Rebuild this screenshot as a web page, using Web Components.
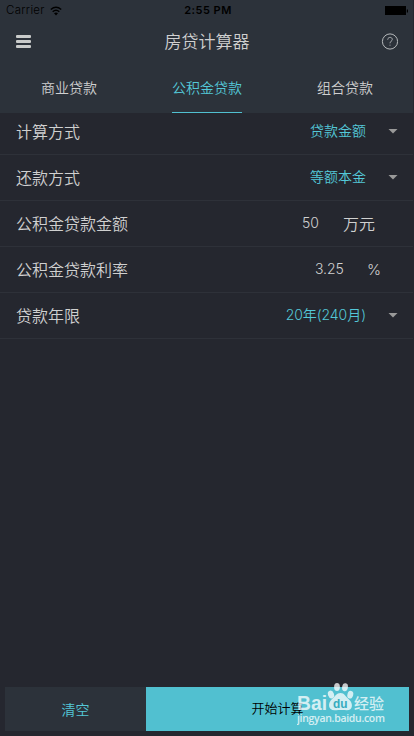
<!DOCTYPE html>
<html lang="zh-CN">
<head>
<meta charset="utf-8">
<meta name="viewport" content="width=device-width, initial-scale=1">
<title>房贷计算器</title>
<style>
html, body {
  height: 100%;
  margin: 0;
}
body {
  --panel: #2c323a;
  --page: #25272f;
  --line: #2e3139;
  --accent: #51c0d0;
  --accent-text: #54c8d8;
  --text: #d0d0d0;
  background: var(--page);
  color: var(--text);
  font-family: Inter, "Noto Sans CJK SC", sans-serif;
  font-weight: 350;
  overflow: hidden;
}
</style>
</head>
<body>
<loan-app>
  <status-bar slot="header">2:55 PM</status-bar>
  <title-bar slot="header">房贷计算器</title-bar>
  <tab-strip slot="header">
    <tab-item>商业贷款</tab-item>
    <tab-item active>公积金贷款</tab-item>
    <tab-item>组合贷款</tab-item>
  </tab-strip>

  <form-row label="计算方式" select>贷款金额</form-row>
  <form-row label="还款方式" select>等额本金</form-row>
  <form-row label="公积金贷款金额" unit="万元" style="--unit-gap: 24px; --end: 38px">50</form-row>
  <form-row label="公积金贷款利率" unit="%" style="--unit-gap: 23px; --unit-size: 15px; --end: 32px">3.25</form-row>
  <form-row label="贷款年限" select style="--spacing: -.05px">20年(240月)</form-row>

  <action-button slot="footer">清空</action-button>
  <action-button slot="footer" primary>开始计算</action-button>
  <water-mark slot="mark"></water-mark>
</loan-app>

<script>
"use strict";

/**
 * Base class: clones the markup of the subclass into an open shadow root.
 */
class BaseElement extends HTMLElement {
  constructor() {
    super();
    this.attachShadow({ mode: 'open' });

    const template = document.createElement("template");
    template.innerHTML = this.constructor.markup;
    this.shadowRoot.appendChild(template.content.cloneNode(true));
  }
}

class LoanApp extends BaseElement {
  static markup = `
<style>
:host {
  display: flex;
  flex-direction: column;
  box-sizing: border-box;
  position: relative;
  height: 736px;
  padding-right: 1px;
}
header {
  position: relative;
  z-index: 1;
  height: 113px;
  background: var(--panel);
}
/* the list is scrolled a little under the header */
main {
  flex: 1;
  margin-top: -4px;
}
footer {
  display: grid;
  grid-template-columns: 141px 1fr;
  height: 44px;
  padding: 0 4px 5px 5px;
}
</style>
<header><slot name="header"></slot></header>
<main><slot></slot></main>
<footer><slot name="footer"></slot></footer>
<slot name="mark"></slot>
`;
}
customElements.define('loan-app', LoanApp);

class StatusBar extends BaseElement {
  static markup = `
<style>
:host {
  display: grid;
  grid-template-columns: 1fr auto 1fr;
  align-items: center;
  height: 20px;
  padding: 0 5px 0 6px;
  color: #000;
  font-size: 11.5px;
  line-height: 21px;
}
.carrier {
  display: flex;
  align-items: center;
  gap: 5px;
  letter-spacing: .3px;
}
.time {
  padding-left: 2px;
  font-size: 11px;
  font-weight: 600;
  letter-spacing: .5px;
}
.battery {
  justify-self: end;
}
svg {
  display: block;
}
</style>
<div class="carrier">
  <span>Carrier</span>
  <svg width="12" height="10" viewBox="0 0 12 10">
    <path d="M.8 3.5Q6-1 11.2 3.5M2.7 5.7Q6 2.9 9.3 5.7" fill="none" stroke="#000" stroke-width="1.5"/>
    <path d="M4 7.3Q6 5.8 8 7.3L6 9.5z"/>
  </svg>
</div>
<span class="time"><slot></slot></span>
<svg class="battery" width="24" height="10" viewBox="0 0 24 10">
  <rect x="1" y="0" width="21" height="9" />
  <rect x="22.8" y="3.5" width="1.2" height="3"/>
</svg>
`;
}
customElements.define('status-bar', StatusBar);

class TitleBar extends BaseElement {
  static markup = `
<style>
:host {
  display: grid;
  grid-template-columns: 1fr auto 1fr;
  align-items: center;
  height: 44px;
  padding: 0 15px 0 16px;
  font-size: 17px;
  line-height: 44px;
}
svg {
  display: block;
}
.help {
  justify-self: end;
  margin-bottom: 1px;
}
</style>
<svg width="15" height="14" viewBox="0 0 15 14" fill="#c9cbca">
  <rect width="15" height="3" rx="1"/>
  <rect y="5" width="15" height="3" rx="1"/>
  <rect y="10" width="15" height="3" rx="1"/>
</svg>
<span><slot></slot></span>
<svg class="help" width="17" height="17" viewBox="0 0 17 17" fill="none" stroke="#c5c8ca">
  <circle cx="9" cy="8.5" r="7.6" stroke-width=".9"/>
  <path d="M6.7 6.7C6.7 3.6 11.3 3.7 11.3 6.4C11.3 8.2 9 8.2 9 10.3M9 11.7V12.7" stroke-width=".8"/>
</svg>
`;
}
customElements.define('title-bar', TitleBar);

class TabStrip extends BaseElement {
  static markup = `
<style>
:host {
  display: grid;
  grid-template-columns: repeat(3, 1fr);
  justify-items: center;
  height: 49px;
  margin-right: -1px;
}
</style>
<slot></slot>
`;
}
customElements.define('tab-strip', TabStrip);

class TabItem extends BaseElement {
  static markup = `
<style>
:host {
  display: block;
  box-sizing: border-box;
  height: 49px;
  font-size: 14px;
  line-height: 48px;
}
:host([active]) {
  color: var(--accent-text);
  border-bottom: 1px solid var(--accent);
}
</style>
<slot></slot>
`;
}
customElements.define('tab-item', TabItem);

/**
 * One line of the form. `select` gives a dropdown value, `unit` a typed one.
 */
class FormRow extends BaseElement {
  static markup = `
<style>
:host {
  display: flex;
  align-items: center;
  box-sizing: border-box;
  height: 46px;
  padding: 1px var(--end, 15px) 0 16px;
  border-bottom: 1px solid var(--line);
  font-size: 16px;
  line-height: 24px;
}
.label {
  flex: 1;
}
.value {
  padding-bottom: 2px;
  font-size: 14px;
  letter-spacing: var(--spacing, 0);
}
:host([select]) .value {
  color: var(--accent-text);
}
.unit {
  margin-left: var(--unit-gap);
  font-size: var(--unit-size, 16px);
}
.arrow {
  width: 10px;
  height: 5px;
  margin: 0 0 2px 22px;
  background: #999;
  clip-path: polygon(0 0, 100% 0, 50% 100%);
}
:host([select]) .unit,
:host(:not([select])) .arrow {
  display: none;
}
</style>
<span class="label"></span>
<span class="value"><slot></slot></span>
<span class="unit"></span>
<span class="arrow"></span>
`;

  connectedCallback() {
    this.shadowRoot.querySelector(".label").textContent = this.getAttribute("label");
    this.shadowRoot.querySelector(".unit").textContent = this.getAttribute("unit") || "";
  }
}
customElements.define('form-row', FormRow);

class ActionButton extends BaseElement {
  static markup = `
<style>
:host {
  display: block;
  height: 44px;
  background: var(--panel);
  color: var(--accent-text);
  font-size: 14px;
  line-height: 46px;
  text-align: center;
}
:host([primary]) {
  background: var(--accent);
  color: #000;
  font-size: 13px;
  line-height: 42px;
}
</style>
<slot></slot>
`;
}
customElements.define('action-button', ActionButton);

class WaterMark extends BaseElement {
  static markup = `
<style>
:host {
  position: absolute;
  left: 297px;
  top: 682px;
  z-index: 2;
  color: #fff;
  opacity: .75;
}
svg {
  display: block;
}
text {
  fill: currentColor;
}
</style>
<svg width="92" height="44" viewBox="0 0 92 44" fill="#fff">
  <text x="0" y="27.5" font-family="Liberation Sans" font-size="20" font-weight="700" textLength="30" lengthAdjust="spacingAndGlyphs">Bai</text>
  <ellipse cx="34" cy="12.5" rx="3" ry="4" transform="rotate(-20 34 12.5)"/>
  <ellipse cx="40" cy="5" rx="2.9" ry="4"/>
  <ellipse cx="48" cy="5.2" rx="2.9" ry="4" transform="rotate(10 48 5.2)"/>
  <ellipse cx="53.3" cy="12.7" rx="2.9" ry="3.9" transform="rotate(15 53.3 12.7)"/>
  <path d="M43.5 11C39.5 11 38 14.5 35 17C30.5 21 31 28.3 37.5 28.3C41 28.3 46 27.8 49.5 28.3C56 28.6 56.5 21.5 52 17.5C48.5 14.5 47.5 11 43.5 11z"/>
  <text x="36" y="26.3" font-family="Liberation Sans" font-size="12" font-weight="700" textLength="14.5" lengthAdjust="spacingAndGlyphs" style="fill:#2ba5b8">du</text>
  <text x="57" y="26.5" font-family="Noto Sans CJK SC" font-size="15" font-weight="500" textLength="30">经验</text>
  <text x="0" y="39.5" font-family="Open Sans" font-size="10.5" font-weight="600" textLength="88">jingyan.baidu.com</text>
</svg>
`;
}
customElements.define('water-mark', WaterMark);
</script>
</body>
</html>
